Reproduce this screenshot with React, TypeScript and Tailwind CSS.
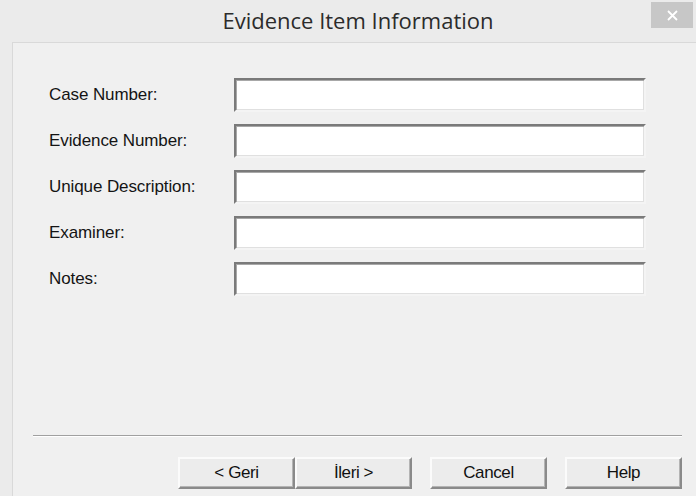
import React from "react";

const labels = ["Case Number:", "Evidence Number:", "Unique Description:", "Examiner:", "Notes:"];

function Field() {
  return (
    <div className="h-[34px] w-[412px] bg-white border-2 border-t-[#7a7a7a] border-l-[#7a7a7a] border-b-[#f4f4f4] border-r-[#f4f4f4] shadow-[inset_1px_1px_0_#a8a8a8,inset_-1px_-1px_0_#e0e0e0]" />
  );
}

function Btn({ children }: { children: React.ReactNode }) {
  return (
    <div className="w-[117px] h-[32px] flex items-center justify-center bg-[#ececec] border-2 border-t-[#fbfbfb] border-l-[#fbfbfb] border-b-[#8a8a8a] border-r-[#8a8a8a] shadow-[inset_-1px_-1px_0_#b4b4b4] text-[17px] tracking-[-0.4px] text-[#111]">
      {children}
    </div>
  );
}

export default function App() {
  return (
    <div className="w-[696px] h-[496px] bg-[#ebebeb] flex flex-col overflow-hidden" style={{ fontFamily: '"Liberation Sans", Arial, sans-serif' }}>
      <div className="h-[42px] shrink-0 relative flex items-center justify-center">
        <span className="text-[22px] text-[#2b2b2b] leading-none -mt-[3px] ml-[20px]" style={{ fontFamily: '"Open Sans", "Noto Sans", sans-serif' }}>
          Evidence Item Information
        </span>
        <div className="absolute right-[3px] top-[2px] w-[42px] h-[26px] bg-[#c7c7c7] flex items-center justify-center">
          <svg width="11" height="11" viewBox="0 0 11 11">
            <path d="M1 1 L10 10 M10 1 L1 10" stroke="#ffffff" strokeWidth="1.8" />
          </svg>
        </div>
      </div>
      <div className="flex-1 ml-[12px] border-l border-t border-[#d9d9d9] bg-[#f0f0f0] flex flex-col">
        <div className="pt-[35px] pl-[36px] grid grid-cols-[185px_412px] gap-y-[12px]">
          {labels.map((l) => (
            <React.Fragment key={l}>
              <div className="h-[34px] flex items-center text-[17px] tracking-[-0.1px] text-[#141414]">{l}</div>
              <Field />
            </React.Fragment>
          ))}
        </div>
        <div className="flex-1" />
        <div className="ml-[20px] mr-[14px] border-t border-[#a0a0a0] border-b border-b-white" />
        <div className="h-[59px] pt-[20px] pr-[14px] flex justify-end">
          <div className="flex">
            <Btn>&lt; Geri</Btn>
            <Btn>İleri &gt;</Btn>
          </div>
          <div className="ml-[18px]">
            <Btn>Cancel</Btn>
          </div>
          <div className="ml-[18px]">
            <Btn>Help</Btn>
          </div>
        </div>
      </div>
    </div>
  );
}
